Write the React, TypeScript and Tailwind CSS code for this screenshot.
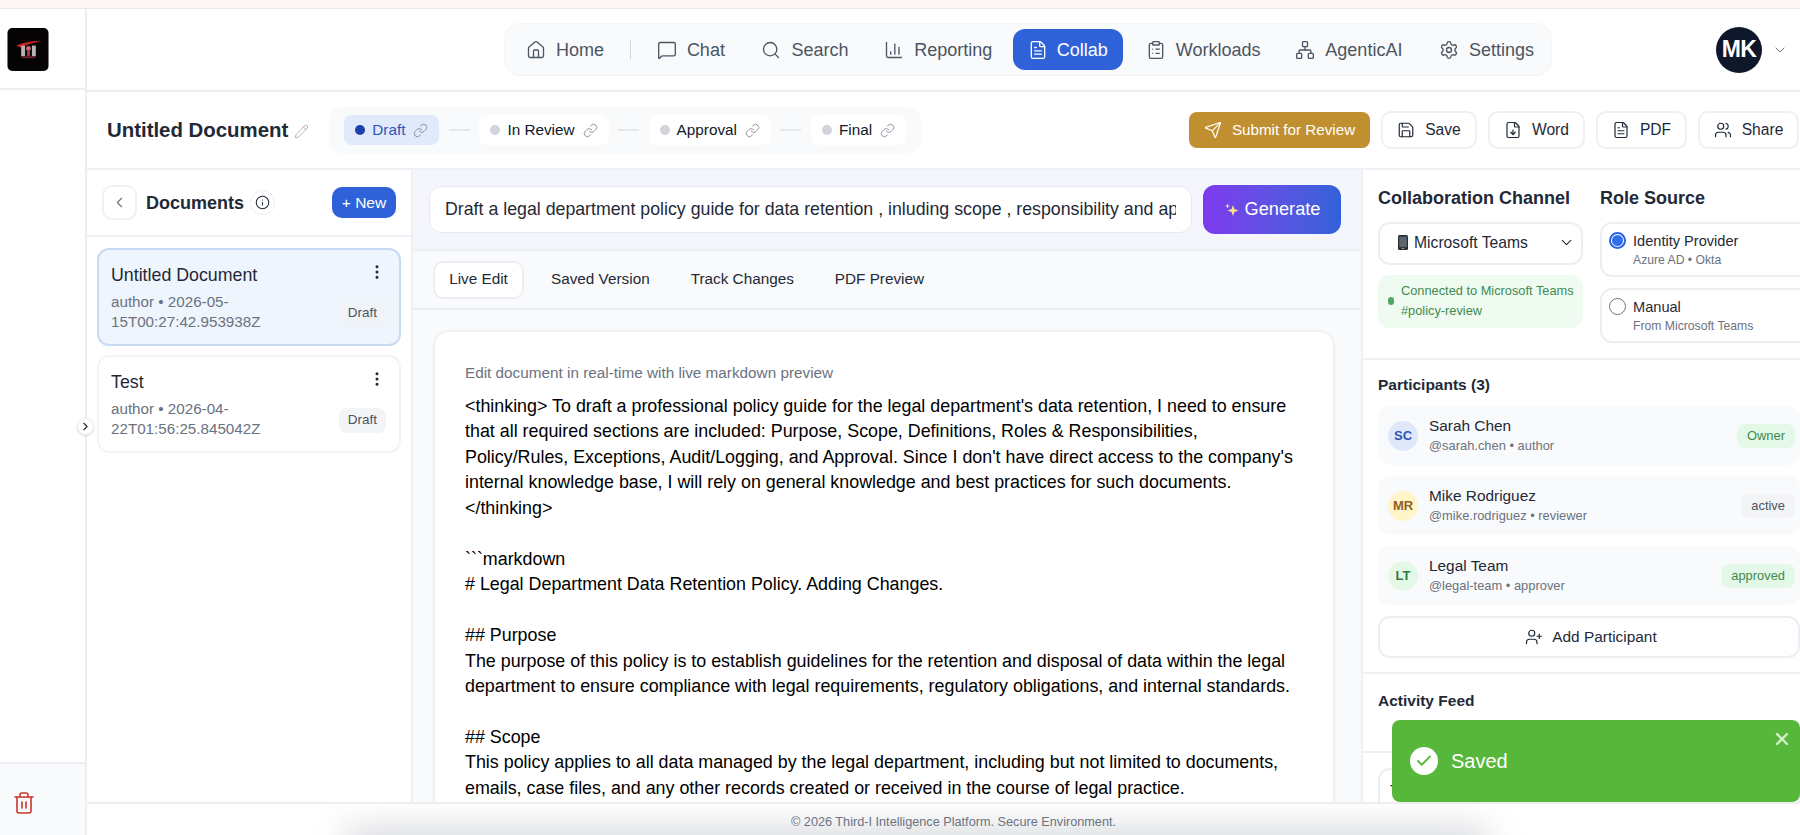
import React from "react";
import { House, MessageSquare, Search, ChartColumn, FileText, ClipboardList, Network, Settings, ChevronDown, ChevronLeft, ChevronRight, Pencil, Link, Send, Save, FileDown, Users, UserPlus, Info, EllipsisVertical, Trash2, X, Check } from "lucide-react";

const nav = [
  { label: "Home", Icon: House, after: "" },
  { label: "Chat", Icon: MessageSquare, after: "w-[3px]" },
  { label: "Search", Icon: Search, after: "w-[2px]" },
  { label: "Reporting", Icon: ChartColumn, after: "w-[4px]" },
  { label: "Collab", Icon: FileText, active: true, after: "w-[7px]" },
  { label: "Workloads", Icon: ClipboardList, after: "w-[1px]" },
  { label: "AgenticAI", Icon: Network, after: "w-[3px]" },
  { label: "Settings", Icon: Settings, after: "" },
];

const stages = ["Draft", "In Review", "Approval", "Final"];

const docs = [
  { title: "Untitled Document", l1: "author • 2026-05-", l2: "15T00:27:42.953938Z", active: true },
  { title: "Test", l1: "author • 2026-04-", l2: "22T01:56:25.845042Z", active: false },
];

const body = `<thinking> To draft a professional policy guide for the legal department's data retention, I need to ensure that all required sections are included: Purpose, Scope, Definitions, Roles & Responsibilities, Policy/Rules, Exceptions, Audit/Logging, and Approval. Since I don't have direct access to the company's internal knowledge base, I will rely on general knowledge and best practices for such documents.
</thinking>

\`\`\`markdown
# Legal Department Data Retention Policy. Adding Changes.

## Purpose
The purpose of this policy is to establish guidelines for the retention and disposal of data within the legal department to ensure compliance with legal requirements, regulatory obligations, and internal standards.

## Scope
This policy applies to all data managed by the legal department, including but not limited to documents, emails, case files, and any other records created or received in the course of legal practice.`;

function Logo() {
  return (
    <svg viewBox="0 0 42 44" className="h-[43px] w-[42px]">
      <rect width="42" height="44" rx="5" fill="#060304" />
      <path d="M9 18 Q20 13 35 13 Q24 15.5 13 20 Z" fill="#c8242c" />
      <rect x="14" y="18" width="4" height="11" fill="#b9b4b4" />
      <rect x="25" y="18" width="4" height="11" fill="#b9b4b4" />
      <circle cx="21.5" cy="21" r="2.5" fill="#c96a80" />
      <rect x="20" y="23" width="3" height="6" fill="#a8384c" />
      <path d="M13 29 H30 L27 31 H16 Z" fill="#6b2028" />
    </svg>
  );
}

function Phone() {
  return (
    <svg viewBox="0 0 10 15" className="h-[15px] w-[10px]">
      <rect width="10" height="15" rx="1.5" fill="#2b2b2b" />
      <rect x="1.2" y="1.6" width="7.6" height="10.6" fill="#5c6670" />
      <rect x="3.8" y="13" width="2.4" height="1" fill="#9ca3af" />
    </svg>
  );
}

function Participant({ initials, name, handle, badge, avatar, badgeCls }: { initials: string; name: string; handle: string; badge: string; avatar: string; badgeCls: string }) {
  return (
    <div className="flex h-[59px] items-center rounded-xl bg-[#f9fafb] pl-[10px] pr-[5px]">
      <div className={`flex h-[30px] w-[30px] items-center justify-center rounded-full text-[13px] font-bold ${avatar}`}>{initials}</div>
      <div className="ml-[11px] flex-1">
        <div className="text-[15.4px] leading-[20px] text-[#1f2937]">{name}</div>
        <div className="text-[12.9px] leading-[19px] text-[#6b7280]">{handle}</div>
      </div>
      <div className={`flex h-[24px] items-center rounded-lg px-[10px] text-[12.9px] ${badgeCls}`}>{badge}</div>
    </div>
  );
}

export default function App() {
  return (
    <div className="relative flex h-[835px] w-[1800px] flex-col overflow-hidden bg-white font-['Liberation_Sans',Arial,sans-serif] text-[#111827]">
      <div className="h-[9px] shrink-0 border-b border-[#e7e7ea] bg-[#fdf6f6]" />
      <div className="flex min-h-0 flex-1">
        {/* Sidebar */}
        <aside className="flex w-[87px] shrink-0 flex-col border-r-2 border-[#eceef1]">
          <div className="flex h-[81px] shrink-0 items-start border-b-2 border-[#eceef1] pl-[7px] pt-[19px]">
            <Logo />
          </div>
          <div className="flex-1" />
          <div className="flex h-[73px] shrink-0 items-start border-t-2 border-[#eceef1] bg-[#f9fafb] pl-[12px] pt-[27px]">
            <Trash2 size={24} strokeWidth={1.6} className="text-[#c9352d]" />
          </div>
        </aside>

        <div className="flex min-w-0 flex-1 flex-col">
          {/* Header */}
          <header className="flex h-[83px] shrink-0 items-center border-b-2 border-[#eceef1]">
            <nav className="ml-[417px] flex h-[53px] w-[1048px] items-center rounded-2xl border border-[#f3f4f6] bg-[#f9fafb] pl-[4px]">
              {nav.map((n, i) => (
                <React.Fragment key={n.label}>
                  <div className={`flex h-[41px] items-center rounded-xl text-[18px] ${n.active ? "gap-[9px] bg-[#2f62d9] px-[15px] text-white" : "gap-[10px] px-[17px] text-[#4b5563]"}`}>
                    <n.Icon size={20} strokeWidth={1.6} />
                    <span className="pt-[2px]">{n.label}</span>
                  </div>
                  {i === 0 && <div className="mx-[9px] h-[19px] w-px bg-[#d1d5db]" />}
                  {n.after && <div className={n.after} />}
                </React.Fragment>
              ))}
            </nav>
            <div className="ml-[164px] flex h-[46px] w-[46px] items-center justify-center rounded-full bg-[#0f172a] text-[23px] font-bold tracking-tight text-white">MK</div>
            <ChevronDown size={16} strokeWidth={1.5} className="ml-[10px] text-[#6b7280]" />
          </header>

          {/* Toolbar */}
          <div className="flex h-[78px] shrink-0 items-center border-b-2 border-[#eef0f3] pl-[20px] pr-[1px]">
            <h1 className="text-[20.4px] font-bold text-[#1f2937]">Untitled Document</h1>
            <Pencil size={15} strokeWidth={1.3} className="ml-[6px] mt-[2px] text-[#9ca3af]" />
            <div className="ml-[20px] flex h-[46px] items-center rounded-xl bg-[#f9fafb] pl-[15px] pr-[15px]">
              {stages.map((s, i) => (
                <React.Fragment key={s}>
                  {i > 0 && <div className="mx-[9.5px] h-[2px] w-[21px] bg-[#e5e7eb]" />}
                  <div className={`flex h-[30px] items-center gap-[7px] rounded-lg px-[11px] text-[15.3px] ${i === 0 ? "bg-[#e0eafa] text-[#2f55b8]" : "bg-white text-[#111827]"}`}>
                    <span className={`h-[10px] w-[10px] rounded-full ${i === 0 ? "bg-[#1e40af]" : "bg-[#d1d5db]"}`} />
                    <span>{s}</span>
                    <Link size={15} strokeWidth={1.2} className="ml-[1px] text-[#6b7280]" />
                  </div>
                </React.Fragment>
              ))}
            </div>
            <div className="ml-auto flex items-center gap-[11px]">
              <div className="flex h-[36px] w-[181px] items-center justify-center gap-[10px] rounded-lg bg-[#c08f2f] text-[15.2px] text-white">
                <Send size={18} strokeWidth={1.6} /> Submit for Review
              </div>
              {[
                { t: "Save", I: Save, w: "w-[96px]" },
                { t: "Word", I: FileDown, w: "w-[97px]" },
                { t: "PDF", I: FileText, w: "w-[91px]" },
                { t: "Share", I: Users, w: "w-[101px]" },
              ].map((b) => (
                <div key={b.t} className={`flex h-[38px] items-center justify-center gap-[10px] rounded-[10px] border-2 border-[#eef0f3] bg-white text-[15.6px] text-[#1f2937] ${b.w}`}>
                  <b.I size={18} strokeWidth={1.6} /> {b.t}
                </div>
              ))}
            </div>
          </div>

          {/* Panels */}
          <div className="flex min-h-0 flex-1">
            {/* Documents */}
            <section className="flex w-[326px] shrink-0 flex-col border-r-2 border-[#eef0f3]">
              <div className="flex h-[67px] shrink-0 items-center border-b-2 border-[#eef0f3] pl-[15px] pr-[15px]">
                <div className="flex h-[35px] w-[35px] items-center justify-center rounded-[10px] border-2 border-[#f0f1f4] text-[#6b7280]">
                  <ChevronLeft size={17} strokeWidth={1.5} />
                </div>
                <span className="ml-[9px] pt-[2px] text-[18px] font-bold text-[#1f2937]">Documents</span>
                <div className="ml-[6px] flex h-[25px] w-[25px] items-center justify-center rounded-full border border-[#eceef1]">
                  <Info size={15} strokeWidth={1.7} className="text-[#1f2937]" />
                </div>
                <div className="ml-auto flex h-[31px] w-[64px] items-center justify-center rounded-[10px] bg-[#2f62d9] text-[15.5px] text-white">+ New</div>
              </div>
              <div className="flex flex-col gap-[9px] pl-[10px] pr-[10px] pt-[11px]">
                {docs.map((d) => (
                  <div key={d.title} className={`relative h-[98px] rounded-xl border-2 pl-[12px] ${d.active ? "border-[#c8d9f1] bg-[#eff5fd]" : "border-[#f3f4f6] bg-white"}`}>
                    <div className="pt-[13px] text-[17.8px] leading-[24px] text-[#1f2937]">{d.title}</div>
                    <div className="mt-[5px] text-[15.2px] leading-[20px] text-[#6b7280]">
                      <div>{d.l1}</div>
                      <div>{d.l2}</div>
                    </div>
                    <EllipsisVertical size={18} strokeWidth={2} className="absolute right-[13px] top-[13px] text-[#1f2937]" />
                    <div className={`absolute right-[13px] top-[51px] flex h-[25px] w-[47px] items-center justify-center rounded-lg text-[13.5px] text-[#4b5563] ${d.active ? "bg-[#f0f3f7]" : "bg-[#f3f4f6]"}`}>Draft</div>
                  </div>
                ))}
              </div>
            </section>

            {/* Center */}
            <section className="flex min-w-0 flex-1 flex-col border-r-2 border-[#eef0f3]">
              <div className="flex h-[81px] shrink-0 items-center gap-[11px] border-b-2 border-[#eceef3] bg-[#f5f6fd] pl-[16px] pr-[20px]">
                <input readOnly value="Draft a legal department policy guide for data retention , inluding scope , responsibility and approval" className="h-[47px] min-w-0 flex-1 rounded-xl border border-[#e8eaef] bg-white px-[15px] text-[17.75px] text-[#1f2937] outline-none" />
                <div className="flex h-[49px] w-[138px] shrink-0 items-center justify-center gap-[5px] rounded-xl bg-gradient-to-r from-[#7c3aed] to-[#2f62d9] pt-[1px] text-[18.2px] text-white">
                  <svg viewBox="0 0 16 16" className="h-[16px] w-[16px]"><path d="M9 3 L10.4 7 L14.5 8.5 L10.4 10 L9 14 L7.6 10 L3.5 8.5 L7.6 7 Z" fill="#fbe08a" /><path d="M3.5 1.5 L4.2 3.4 L6 4 L4.2 4.7 L3.5 6.5 L2.8 4.7 L1 4 L2.8 3.4 Z" fill="#fbe08a" /></svg>
                  Generate
                </div>
              </div>
              <div className="flex h-[59px] shrink-0 items-center gap-[26px] border-b-2 border-[#eceef1] bg-[#f9fafb] pl-[20px] text-[15.3px] text-[#1f2937]">
                <div className="flex h-[38px] w-[91px] items-center justify-center rounded-[10px] border-2 border-[#eceef1] bg-white">Live Edit</div>
                <span className="ml-[1px]">Saved Version</span>
                <span className="ml-[15px]">Track Changes</span>
                <span className="ml-[15px]">PDF Preview</span>
              </div>
              <div className="min-h-0 flex-1 overflow-hidden bg-[#f9fafb] pl-[20px] pr-[26px] pt-[20px]">
                <div className="h-[600px] rounded-2xl border-2 border-[#eef0f3] bg-white pl-[30px] pr-[30px] pt-[30px]">
                  <div className="text-[15.3px] leading-[22px] text-[#6b7280]">Edit document in real-time with live markdown preview</div>
                  <div className="mt-[10px] whitespace-pre-wrap text-[17.88px] leading-[25.45px] text-black">{body}</div>
                </div>
              </div>
            </section>

            {/* Right */}
            <section className="relative w-[437px] shrink-0 overflow-hidden">
              <div className="flex h-[190px] gap-[17px] border-b-2 border-[#eef0f3] pl-[15px] pt-[16px]">
                <div className="w-[205px] shrink-0">
                  <div className="text-[18px] font-bold leading-[24px] text-[#1f2937]">Collaboration Channel</div>
                  <div className="mt-[12px] flex h-[43px] items-center rounded-xl border-2 border-[#eceef1] pb-[2px] pl-[18px] pr-[6px] text-[15.7px] text-[#1f2937]">
                    <Phone />
                    <span className="ml-[6px] flex-1">Microsoft Teams</span>
                    <ChevronDown size={17} strokeWidth={1.6} />
                  </div>
                  <div className="mt-[10px] flex h-[53px] items-center rounded-xl bg-[#effbf0] pb-[2px] pl-[10px] text-[12.8px] leading-[20px] text-[#3f8a4f]">
                    <span className="h-[8px] w-[6px] shrink-0 rounded-full bg-[#4fa85f]" />
                    <div className="ml-[7px] whitespace-nowrap">
                      <div>Connected to Microsoft Teams</div>
                      <div>#policy-review</div>
                    </div>
                  </div>
                </div>
                <div className="w-[210px] shrink-0">
                  <div className="text-[18px] font-bold leading-[24px] text-[#1f2937]">Role Source</div>
                  <div className="mt-[12px] flex flex-col gap-[11px]">
                    <div className="flex h-[55px] items-start rounded-xl border-2 border-[#eceef1] pl-[7px] pt-[7px]">
                      <span className="mt-[1px] flex h-[17px] w-[17px] items-center justify-center rounded-full border-2 border-[#2563eb]"><span className="h-[11px] w-[11px] rounded-full bg-[#2f6fe8]" /></span>
                      <div className="ml-[7px]">
                        <div className="text-[14.6px] leading-[20px] text-[#1f2937]">Identity Provider</div>
                        <div className="text-[12.2px] leading-[19px] text-[#6b7280]">Azure AD • Okta</div>
                      </div>
                    </div>
                    <div className="flex h-[55px] items-start rounded-xl border-2 border-[#eceef1] pl-[7px] pt-[7px]">
                      <span className="mt-[1px] h-[17px] w-[17px] rounded-full border-[1.5px] border-[#6b7280]" />
                      <div className="ml-[7px]">
                        <div className="text-[14.6px] leading-[20px] text-[#1f2937]">Manual</div>
                        <div className="text-[12.2px] leading-[19px] text-[#6b7280]">From Microsoft Teams</div>
                      </div>
                    </div>
                  </div>
                </div>
              </div>
              <div className="h-[314px] border-b-2 border-[#eef0f3] pl-[15px] pt-[15px]">
                <div className="text-[15.5px] font-bold leading-[20px] text-[#1f2937]">Participants (3)</div>
                <div className="mt-[11px] flex flex-col gap-[11px]">
                  <Participant initials="SC" name="Sarah Chen" handle="@sarah.chen • author" badge="Owner" avatar="bg-[#dfe8fa] text-[#2f55b8]" badgeCls="bg-[#e3f8e7] text-[#3f8a4f]" />
                  <Participant initials="MR" name="Mike Rodriguez" handle="@mike.rodriguez • reviewer" badge="active" avatar="bg-[#fef6c8] text-[#92601e]" badgeCls="bg-[#f3f4f6] text-[#4b5563]" />
                  <Participant initials="LT" name="Legal Team" handle="@legal-team • approver" badge="approved" avatar="bg-[#e3f8e7] text-[#2f7a44]" badgeCls="bg-[#e3f8e7] text-[#3f8a4f]" />
                  <div className="flex h-[42px] items-center justify-center gap-[9px] rounded-xl border-2 border-[#eceef1] text-[15.4px] text-[#1f2937]">
                    <UserPlus size={18} strokeWidth={1.6} className="ml-[4px]" /> Add Participant
                  </div>
                </div>
              </div>
              <div className="h-[79px] border-b-2 border-[#eef0f3] pl-[15px] pt-[17px]">
                <div className="text-[15.5px] font-bold leading-[20px] text-[#1f2937]">Activity Feed</div>
              </div>
              <div className="ml-[15px] mt-[15px] h-[60px] rounded-xl border-2 border-[#eceef1] pl-[10px] pt-[10px] text-[16px] text-[#1f2937]">T</div>
            </section>
          </div>

          {/* Footer */}
          <footer className="relative flex h-[33px] shrink-0 items-center justify-center overflow-hidden border-t-2 border-[#eceef1] bg-white pt-[6px] text-[12.7px] text-[#6b7280]">
            <div className="absolute bottom-[-22px] left-[260px] h-[24px] w-[1140px] bg-[#c4c7cc] blur-[18px]" />
            <span className="relative pl-[20px]">© 2026 Third-I Intelligence Platform. Secure Environment.</span>
          </footer>
        </div>
      </div>

      {/* Collapsed rail toggle */}
      <div className="absolute left-[77px] top-[418px] flex h-[17px] w-[17px] items-center justify-center rounded-full border border-[#eceef1] bg-white shadow-sm">
        <ChevronRight size={13} strokeWidth={2} className="text-[#1f2937]" />
      </div>

      {/* Toast */}
      <div className="absolute left-[1392px] top-[720px] flex h-[82px] w-[408px] items-center rounded-lg bg-[#57b73b] pl-[18px]">
        <span className="flex h-[28px] w-[28px] items-center justify-center rounded-full bg-white">
          <Check size={18} strokeWidth={2.4} className="text-[#57b73b]" />
        </span>
        <span className="ml-[13px] text-[20px] text-white">Saved</span>
        <X size={20} strokeWidth={2.8} className="absolute right-[8px] top-[9px] text-[#d5f0cc]" />
      </div>
    </div>
  );
}
